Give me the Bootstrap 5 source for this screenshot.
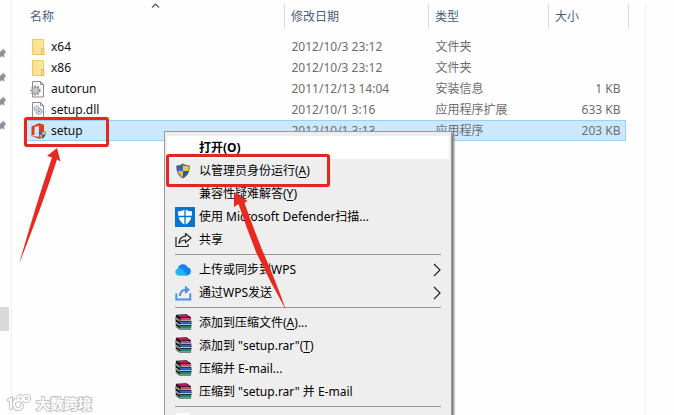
<!DOCTYPE html>
<html lang="zh-CN">
<head>
<meta charset="utf-8">
<meta name="viewport" content="width=device-width, initial-scale=1">
<title>setup</title>
<link href="https://cdn.jsdelivr.net/npm/bootstrap@5.3.0/dist/css/bootstrap.min.css" rel="stylesheet">
<style>
  body { font: 12px/21px "Noto Sans", "Noto Sans CJK SC", sans-serif; color: #111; background: #fefefe; }
  .side-strip { width: 12px; border-right: 1px solid #f0f0f0; }
  .pins { padding-top: 42px; }
  .pins svg { display: block; height: 24px; width: 8px; }
  .scroll-thumb { width: 9px; height: 24px; background: #d9d9d9; margin-top: 169px; }
  .file-pane { padding-left: 15px; border-right: 1px solid #f0f0f0; margin: 3px 28px 0 0; }
  .files { table-layout: fixed; }
  .files th { font-weight: 400; color: #4c607a; padding: 0 0 0 6px; height: 27px; line-height: 27px; border-right: 1px solid #dedede; }
  .files th:first-child { padding-left: 3px; }
  .files th.no-line { border-right: 0; }
  .files thead::after { content: ""; display: block; height: 6px; }
  .files td { padding: 0 0 0 7px; height: 21px; color: #6d6d6d; white-space: nowrap; }
  .files td:first-child { padding-left: 2px; color: #111; }
  .files td.size { padding-right: 5px; }
  .files svg { display: block; }
  .files .file-icon { width: 18px; height: 18px; overflow: visible; }
  .files .picked td { background: #cce8ff; box-shadow: inset 0 1px #99d1f5, inset 0 -1px #99d1f5; }
  .files .picked td.size { box-shadow: inset 0 1px #99d1f5, inset 0 -1px #99d1f5, inset -1px 0 #99d1f5; }
  .files .picked td.gutter { background: none; box-shadow: none; }
  .col-date { width: 144px; } .col-type { width: 120px; } .col-size { width: 77px; } .col-gutter { width: 3px; }
  .sort-mark { left: 50%; top: 0; margin-left: -5px; }
  .ctx { left: 164px; top: 131px; bottom: 0; width: 288px; padding: 4px 2px 0; border: 1px solid #999; border-bottom: 0; border-radius: 0; background: #eee; font-size: 12px; color: #000; box-shadow: 2px 3px 2px #777; overflow: hidden; }
  .ctx .dropdown-item { display: flex; align-items: center; height: 23px; padding: 0 8px 0 0; color: #000; background: none; }
  .ctx .dropdown-item.current { background: #fff; font-weight: 700; }
  .ctx .partial { height: 5px; padding-top: 3px; overflow: hidden; }
  .ctx .glyph { width: 32px; flex: none; display: flex; justify-content: center; }
  .ctx .wide-glyph { padding-left: 4px; }
  .ctx .dropdown-divider { margin: 3px 8px; border-color: #999; opacity: 1; }
  .ctx u { text-underline-offset: 2px; }
  .frame { border: 3px solid #e4281f; border-radius: 3px; box-shadow: 0 0 1px #f77; z-index: 1100; pointer-events: none; }
  .frame-file { left: 24px; top: 117px; width: 85px; height: 30px; }
  .frame-run { left: 166px; top: 154px; width: 164px; height: 33px; }
  .arrows { left: 0; top: 0; z-index: 1101; pointer-events: none; }
  .watermark { left: 7px; bottom: 2px; color: #fff; font: 700 14px/20px "Noto Sans CJK SC", sans-serif; -webkit-text-stroke: 2px #c4c4c4; paint-order: stroke fill; }
  .mark-edge { stroke: #c4c4c4; stroke-width: 4; }
  .mark-core { stroke: #fff; stroke-width: 2; }
</style>
<script src="https://cdn.jsdelivr.net/npm/bootstrap@5.3.0/dist/js/bootstrap.bundle.min.js"></script>
</head>
<body class="vh-100 overflow-hidden position-relative">
<svg width="0" height="0" class="position-absolute" aria-hidden="true">
  <defs>
    <linearGradient id="cloudFill" x1="0" y1="1" x2="1" y2="0"><stop offset="0" stop-color="#12b8ef"/><stop offset=".45" stop-color="#1687f5"/><stop offset="1" stop-color="#1c6df0"/></linearGradient>
    <linearGradient id="paperFill" x1="0" x2="1"><stop offset="0" stop-color="#f9df8c"/><stop offset="1" stop-color="#fde9a4"/></linearGradient>
    <symbol id="pin" viewBox="0 0 8 24"><path d="M0 10l1-1 1.500-1.500V7.500l1-.5 2.500 3-1 1-1 2.500.5 1.500-1 .5-1.500-1.500L0 15.500z" fill="#8b949c"/></symbol>
    <symbol id="folder" viewBox="0 0 18 18"><path d="M3.500 1.500h11v15h-11z" fill="url(#paperFill)" stroke="#ecca68"/><path d="M12.500 10.500h2.500v6h-2.500z" fill="#fbe08b" stroke="#dcb444" stroke-width=".8"/></symbol>
    <symbol id="sheet" viewBox="0 0 18 18"><path d="M3.500 1.500h8l3 3v12.500h-11z" fill="#fafafa" stroke="#8c8c8c"/><path d="M11.500 1.500v3h3" fill="none" stroke="#8c8c8c"/></symbol>
    <symbol id="shield" viewBox="0 0 16 16"><path d="M8 .5C6 2 3.500 2.500 1.300 2.500c0 6 1.500 10 6.700 13 5.200-3 6.700-7 6.700-13C12.500 2.500 10 2 8 .5z" fill="#4c5a63"/><path d="M8 2v6H2.600C2.300 6.500 2.200 5 2.200 3.500 4.200 3.400 6.200 3 8 2z" fill="#2d6cb8"/><path d="M8 2v6h5.400c.3-1.500.4-3 .4-4.500C11.800 3.400 9.800 3 8 2z" fill="#f5c453"/><path d="M8 8v6.400C5.200 12.700 3.500 10.800 2.600 8z" fill="#f0b73f"/><path d="M8 8v6.400c2.800-1.700 4.500-3.600 5.400-6.400z" fill="#245c9e"/></symbol>
    <symbol id="books" viewBox="0 0 17 17">
      <path d="M1 .8L11.500.3l4.500 3v2l.5 4-.5 6.500H5L.8 13V9.500L.5 5z" fill="#151515"/>
      <path d="M1.500 1.200l9.500-.5 4 2.500H5.500z" fill="#c2185b"/><path d="M5.500 3.900H16v1.500H5.500z" fill="#e33b86"/>
      <path d="M5.500 6.200H16" stroke="#efe6d8" stroke-width="1"/>
      <path d="M5 7.600h11v2.200H5z" fill="#3d5fd0"/><path d="M5 10.600h11" stroke="#a9e4ee" stroke-width="1"/>
      <path d="M5 12h11v2H5z" fill="#0f8f68"/><path d="M5 14.900h11" stroke="#b8ecd4" stroke-width="1"/>
      <path d="M1 3.800l3.700 2.400M1 5l3.700 2.400M1 8.200l3.700 2.400M1 9.400l3.700 2.400M1 12.200l3.700 2.400" stroke="#f2f2f2" stroke-width=".7"/>
    </symbol>
    <symbol id="more" viewBox="0 0 8 14"><path d="M1 1l6 6-6 6" fill="none" stroke="#222" stroke-width="1.200"/></symbol>
  </defs>
</svg>

<div class="d-flex h-100">
  <aside class="side-strip flex-shrink-0" aria-hidden="true">
    <div class="pins"><svg><use href="#pin"/></svg><svg><use href="#pin"/></svg><svg><use href="#pin"/></svg><svg><use href="#pin"/></svg></div>
    <div class="scroll-thumb"></div>
  </aside>
  <main class="file-pane flex-grow-1">
    <div class="me-3">
    <table class="files w-100">
      <colgroup><col><col class="col-date"><col class="col-type"><col class="col-size"><col class="col-gutter"></colgroup>
      <thead>
        <tr>
          <th class="position-relative" scope="col">名称<svg class="position-absolute sort-mark" width="9" height="5" aria-hidden="true"><path d="M1 4.500l3.500-3.500L8 4.500" fill="none" stroke="#555" stroke-width="1.200"/></svg></th>
          <th scope="col">修改日期</th><th scope="col">类型</th><th scope="col" class="no-line">大小</th><th aria-hidden="true"></th>
        </tr>
      </thead>
      <tbody>
        <tr><td><div class="d-flex align-items-center gap-1"><svg class="file-icon"><use href="#folder"/></svg><span>x64</span></div></td><td>2012/10/3 23:12</td><td>文件夹</td><td class="size"></td><td class="gutter"></td></tr>
        <tr><td><div class="d-flex align-items-center gap-1"><svg class="file-icon"><use href="#folder"/></svg><span>x86</span></div></td><td>2012/10/3 23:12</td><td>文件夹</td><td class="size"></td><td class="gutter"></td></tr>
        <tr><td><div class="d-flex align-items-center gap-1"><svg class="file-icon" viewBox="0 0 18 18"><use href="#sheet"/><circle cx="6.500" cy="10.500" r="4.200" fill="#f2f2f2" stroke="#8e8e8e" stroke-width="1.800" stroke-dasharray="1.800 1.200"/><circle cx="6.500" cy="10.500" r="3.200" fill="#d8d8d8" stroke="#888" stroke-width=".8"/><circle cx="6.500" cy="10.500" r="1.300" fill="#fff" stroke="#888" stroke-width=".7"/></svg><span>autorun</span></div></td><td>2011/12/13 14:04</td><td>安装信息</td><td class="size text-end">1 KB</td><td class="gutter"></td></tr>
        <tr><td><div class="d-flex align-items-center gap-1"><svg class="file-icon" viewBox="0 0 18 18"><use href="#sheet"/><circle cx="7.500" cy="7.500" r="2.300" fill="#dde5ec" stroke="#8797a8" stroke-width="1.200" stroke-dasharray="1.500 .8"/><circle cx="10" cy="10.500" r="2.800" fill="#dde5ec" stroke="#8797a8" stroke-width="1.200" stroke-dasharray="1.500 .8"/><circle cx="10" cy="10.500" r="1" fill="#7b8b9b"/></svg><span>setup.dll</span></div></td><td>2012/10/1 3:16</td><td>应用程序扩展</td><td class="size text-end">633 KB</td><td class="gutter"></td></tr>
        <tr class="picked"><td><div class="d-flex align-items-center gap-1"><svg class="file-icon" viewBox="0 0 18 18"><path d="M2.500 4.500L10 1.200l5 1.600v12.400l-5 1.600L2.500 14l7.500.8V3.800L5.500 5v7.500l-3 1.500z" fill="#dc3e15"/><svg x="9" y="8.500" width="8.500" height="8.500"><use href="#shield"/></svg></svg><span>setup</span></div></td><td>2012/10/1 3:13</td><td>应用程序</td><td class="size text-end">203 KB</td><td class="gutter"></td></tr>
      </tbody>
    </table>
    </div>
  </main>
</div>

<ul class="dropdown-menu show ctx">
  <li><button type="button" class="dropdown-item current"><span class="glyph"></span><span>打开(<u>O</u>)</span></button></li>
  <li><button type="button" class="dropdown-item"><span class="glyph"><svg width="16" height="16"><use href="#shield"/></svg></span><span>以管理员身份运行(<u>A</u>)</span></button></li>
  <li><button type="button" class="dropdown-item"><span class="glyph"></span><span>兼容性疑难解答(<u>Y</u>)</span></button></li>
  <li><button type="button" class="dropdown-item"><span class="glyph wide-glyph"><svg width="20" height="20" viewBox="0 0 20 20"><path d="M0 0h20v20H0z" fill="#0874cc"/><path d="M10 2.200c-2 1.500-4.500 2-7 2 0 7 1.500 10.500 7 13.600 5.500-3.100 7-6.600 7-13.600-2.500 0-5-.5-7-2z" fill="#fff"/><path d="M10 2v16M3 9.500h14" stroke="#0874cc" stroke-width="1.300"/></svg></span><span>使用 Microsoft Defender扫描...</span></button></li>
  <li><button type="button" class="dropdown-item"><span class="glyph"><svg width="17" height="16" viewBox="0 0 17 16" fill="none" stroke="#222" stroke-width="1.200" stroke-linejoin="round"><path d="M1 5v9.500h12V12"/><path d="M10.500 1.500L16 6l-5.500 4.500V8C7.500 8 5.500 9 4 11.500 4.300 7 6.500 4.500 10.500 4.200z"/></svg></span><span>共享</span></button></li>
  <li><hr class="dropdown-divider"></li>
  <li><button type="button" class="dropdown-item"><span class="glyph"><svg width="16" height="13" viewBox="0 0 16 13"><path d="M3.700 12.500A3.600 3.600 0 0 1 3 5.500 5 5 0 0 1 12.500 4.200a4.200 4.200 0 0 1-.5 8.300z" fill="url(#cloudFill)"/><path d="M3 5.500c3-.8 5 1 6.500 3.500S12 12 13 12.300l-1 .2H3.700A3.600 3.600 0 0 1 3 5.500z" fill="#25c7ee" opacity=".65"/></svg></span><span class="flex-grow-1">上传或同步到WPS</span><svg width="8" height="14"><use href="#more"/></svg></button></li>
  <li><button type="button" class="dropdown-item"><span class="glyph"><svg width="17" height="16" viewBox="0 0 17 16" fill="none" stroke="#4a90ea" stroke-width="1.900"><path d="M1.300 8.500V14.500h14V8.500"/><path d="M5 11c0-4 2-6.300 6.500-6.300"/><path d="M10 .5l5 4.200-5 4.200z" fill="#4a90ea" stroke="none"/></svg></span><span class="flex-grow-1">通过WPS发送</span><svg width="8" height="14"><use href="#more"/></svg></button></li>
  <li><hr class="dropdown-divider"></li>
  <li><button type="button" class="dropdown-item"><span class="glyph"><svg width="17" height="17"><use href="#books"/></svg></span><span>添加到压缩文件(<u>A</u>)...</span></button></li>
  <li><button type="button" class="dropdown-item"><span class="glyph"><svg width="17" height="17"><use href="#books"/></svg></span><span>添加到 "setup.rar"(<u>T</u>)</span></button></li>
  <li><button type="button" class="dropdown-item"><span class="glyph"><svg width="17" height="17"><use href="#books"/></svg></span><span>压缩并 E-mail...</span></button></li>
  <li><button type="button" class="dropdown-item"><span class="glyph"><svg width="17" height="17"><use href="#books"/></svg></span><span>压缩到 "setup.rar" 并 E-mail</span></button></li>
  <li><hr class="dropdown-divider"></li>
  <li class="partial"><span class="glyph"><svg width="14" height="2"><path d="M0 2V1l1-1h12l1 1v1z" fill="#fff"/></svg></span></li>
</ul>

<div class="position-absolute frame frame-file"></div>
<div class="position-absolute frame frame-run"></div>
<svg class="position-absolute arrows" width="300" height="320" aria-hidden="true" fill="#e8291f">
  <path d="M57 148L47 156l5 1.500Q38 198 19 264 42 206 57 159.500l3.500 2z"/>
  <path d="M234 192v15l4.500-3q8 24 17.500 48 14 30 30 58-11-31-23-58-10-25-18.500-49l3-2z"/>
</svg>

<div class="position-absolute watermark d-flex align-items-center gap-1" aria-hidden="true">
  <svg width="25" height="18" viewBox="0 0 25 18" fill="none" stroke-linecap="round">
    <defs><g id="logoMark"><path d="M2 6l2-1v9M8 6c-2 4-1 9 3 9 3 0 4-2 4-4M7 8l4-2"/><circle cx="13.500" cy="4.500" r="2.300"/><circle cx="19.500" cy="4.500" r="2.700"/></g></defs>
    <use href="#logoMark" class="mark-edge"/><use href="#logoMark" class="mark-core"/>
  </svg>
  <span>大数跨境</span>
</div>
</body>
</html>
